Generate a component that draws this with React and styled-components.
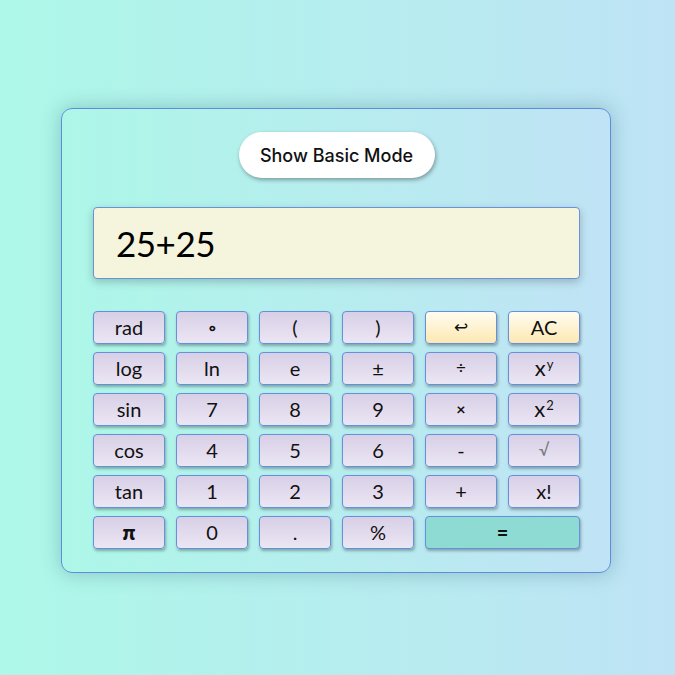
import React from "react";
import styled, { createGlobalStyle } from "styled-components";

const Global = createGlobalStyle`
  * { box-sizing: border-box; }
  html, body { margin: 0; padding: 0; }
  body {
    min-height: 100vh;
    background: linear-gradient(to right, #adf8e8, #bee3f5);
    font-family: Lato, "Noto Sans", sans-serif;
  }
`;

const Page = styled.div`
  min-height: 100vh;
  display: flex;
  align-items: center;
  justify-content: center;
  padding: 6px 3px 0 0;
`;

const Card = styled.div`
  width: 550px;
  border: 1px solid #5f8ddb;
  border-radius: 11px;
  background: linear-gradient(to right, #adf7e8, #c0e3f5);
  box-shadow: 0 0 20px rgba(40, 90, 110, 0.32);
  padding: 23px 30px 23px 31px;
  display: flex;
  flex-direction: column;
  align-items: center;
`;

const Toggle = styled.button`
  width: 196px;
  height: 46px;
  border: none;
  border-radius: 23px;
  background: #fff;
  box-shadow: 1px 2px 4px rgba(0, 0, 0, 0.35);
  font-family: Inter, "Open Sans", sans-serif;
  font-size: 18px;
  font-weight: 500;
  color: #111;
  cursor: pointer;
`;

const Display = styled.div`
  align-self: stretch;
  margin-top: 29px;
  height: 72px;
  background: #f5f4dc;
  border: 1px solid #6b92d8;
  border-radius: 4px;
  box-shadow: 0 3px 8px rgba(0, 0, 0, 0.22);
  display: flex;
  align-items: center;
  padding-left: 22px;
  font-family: Lato, sans-serif;
  font-size: 35px;
  color: #000;
  letter-spacing: -0.5px;
`;

const Keypad = styled.div`
  align-self: stretch;
  margin-top: 32px;
  display: grid;
  grid-template-columns: repeat(6, 72px);
  grid-auto-rows: 33px;
  column-gap: 11px;
  row-gap: 8px;
`;

const variants = {
  normal: "linear-gradient(to bottom, #d8cfe6, #ebe6f4)",
  warm: "linear-gradient(to bottom, #fffcf0, #fde8b2)",
  equal: "#8ddbd3",
};

const Key = styled.button`
  grid-column: span ${(p) => p.$span || 1};
  border: 1px solid #6490dc;
  border-radius: 4px;
  background: ${(p) => variants[p.$variant || "normal"]};
  box-shadow: 1px 2px 3px rgba(0, 0, 0, 0.3);
  font-family: Lato, "Noto Sans", sans-serif;
  font-size: ${(p) => p.$size || 20}px;
  font-weight: ${(p) => p.$weight || 400};
  color: ${(p) => p.$color || "#111"};
  padding: 0 0 2px;
  display: flex;
  align-items: center;
  justify-content: center;
  cursor: pointer;
  line-height: 1;

  sup {
    font-size: 13px;
    position: relative;
    top: -3px;
    margin-left: 1px;
  }
`;

const keys = [
  { l: "rad" }, { l: "∘", size: 17, weight: 700 }, { l: "(" }, { l: ")" }, { l: "↩", v: "warm", size: 17 }, { l: "AC", v: "warm", size: 20 },
  { l: "log" }, { l: "ln" }, { l: "e" }, { l: "±" }, { l: "÷", size: 17 }, { l: "x", sup: "y", size: 22 },
  { l: "sin" }, { l: "7" }, { l: "8" }, { l: "9" }, { l: "×", size: 16, weight: 700 }, { l: "x", sup: "2", size: 22 },
  { l: "cos" }, { l: "4" }, { l: "5" }, { l: "6" }, { l: "-" }, { l: "√", color: "#777", size: 17 },
  { l: "tan" }, { l: "1" }, { l: "2" }, { l: "3" }, { l: "+" }, { l: "x!" },
  { l: "π", weight: 800 }, { l: "0" }, { l: "." }, { l: "%" }, { l: "=", v: "equal", span: 2, weight: 700 },
];

export default function App() {
  return (
    <>
      <Global />
      <Page>
        <Card>
          <Toggle>Show Basic Mode</Toggle>
          <Display>25+25</Display>
          <Keypad>
            {keys.map((k, i) => (
              <Key
                key={i}
                $variant={k.v}
                $span={k.span}
                $size={k.size}
                $weight={k.weight}
                $color={k.color}
              >
                {k.l}
                {k.sup && <sup>{k.sup}</sup>}
              </Key>
            ))}
          </Keypad>
        </Card>
      </Page>
    </>
  );
}
